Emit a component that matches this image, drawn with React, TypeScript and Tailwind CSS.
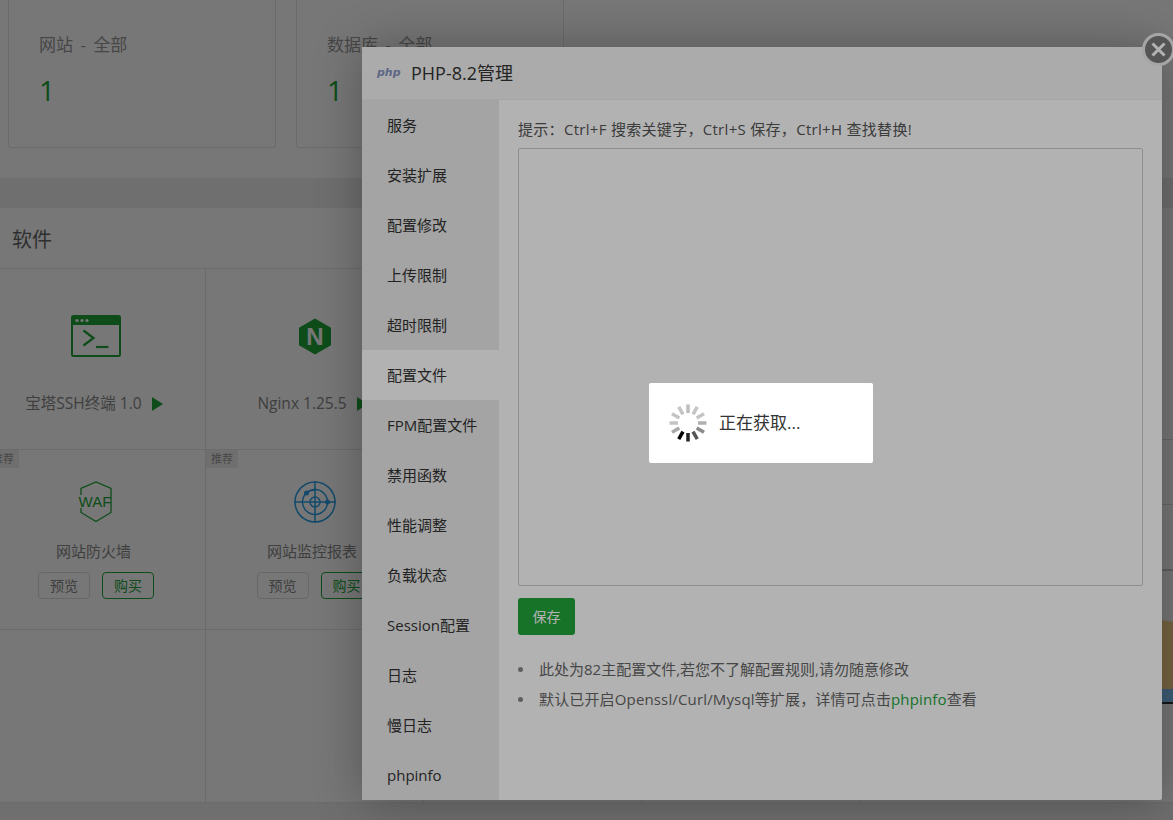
const SANS = "font-['Open_Sans','Noto_Sans_CJK_SC',sans-serif]";

const MENU = [
  "服务",
  "安装扩展",
  "配置修改",
  "上传限制",
  "超时限制",
  "配置文件",
  "FPM配置文件",
  "禁用函数",
  "性能调整",
  "负载状态",
  "Session配置",
  "日志",
  "慢日志",
  "phpinfo",
];

const SPINNER = [
  "#bdbdbd", "#c4c4c4", "#c4c4c4", "#b0b0b0", "#8a8a8a", "#555555",
  "#222222", "#000000", "#a8a8a8", "#c4c4c4", "#c4c4c4", "#c4c4c4",
];

function TerminalIcon() {
  return (
    <svg width="50" height="42" viewBox="0 0 50 42">
      <rect x="1" y="1" width="48" height="40" rx="1.5" fill="none" stroke="#20a53a" strokeWidth="2" />
      <rect x="1" y="1" width="48" height="9" fill="#20a53a" />
      <circle cx="6" cy="5.5" r="1.6" fill="#fff" />
      <circle cx="11" cy="5.5" r="1.6" fill="#fff" />
      <circle cx="16" cy="5.5" r="1.6" fill="#fff" />
      <path d="M12.500 15.500l10 7.500-10 7.500" fill="none" stroke="#20a53a" strokeWidth="2.200" />
      <path d="M25 32h12.500" fill="none" stroke="#20a53a" strokeWidth="2.200" />
    </svg>
  );
}

function NginxIcon() {
  return (
    <svg width="34" height="37" viewBox="0 0 34 37">
      <path d="M17 0.5l16 9.2v17.6l-16 9.2-16-9.2V9.700z" fill="#20a53a" />
      <text x="17" y="26.500" textAnchor="middle" fontSize="24" fontWeight="700" fill="#fff" fontFamily="Liberation Sans, sans-serif">
        N
      </text>
    </svg>
  );
}

function WafIcon() {
  return (
    <svg width="36" height="42" viewBox="0 0 36 42">
      <path d="M3 14V7.500L18 1l15 6.500V27M3 27v4.500L18 40.500l15-9V27" fill="none" stroke="#20a53a" strokeWidth="1.300" />
      <text x="17" y="25.500" textAnchor="middle" fontSize="15" fill="#20a53a" fontFamily="Liberation Sans, sans-serif">
        WAF
      </text>
    </svg>
  );
}

function RadarIcon() {
  return (
    <svg width="42" height="42" viewBox="0 0 42 42" fill="none" stroke="#2a9ee6" strokeWidth="1.500">
      <circle cx="21" cy="21" r="20" />
      <circle cx="21" cy="21" r="12.500" />
      <circle cx="21" cy="21" r="5" />
      <path d="M21 0v42M0 21h42" />
      <path d="M13 11.500c3-2 6-2.500 8-2.500" />
      <circle cx="12.500" cy="12" r="2.500" fill="#2a9ee6" stroke="none" />
      <circle cx="33.500" cy="21" r="2.500" fill="#2a9ee6" stroke="none" />
    </svg>
  );
}

function Spinner() {
  return (
    <svg width="38" height="38" viewBox="0 0 38 38" className="shrink-0">
      {SPINNER.map((color, i) => (
        <line
          key={i}
          x1="19"
          y1="0.5"
          x2="19"
          y2="9"
          stroke={color}
          strokeWidth="3.500"
          transform={`rotate(${i * 30} 19 19)`}
        />
      ))}
    </svg>
  );
}

function PlayCell({ icon, name }: { icon: React.ReactNode; name: string }) {
  return (
    <div className="flex flex-col items-center border-r border-b border-[#e6e6e6] pt-[45px]">
      <div className="flex h-[44px] items-center">{icon}</div>
      <div className="mt-[34px] flex items-center pr-[4px] text-[15.5px] text-[#888]">
        <span>{name}</span>
        <span className="ml-[10px] h-0 w-0 border-y-[7px] border-l-[11px] border-y-transparent border-l-[#20a53a]" />
      </div>
    </div>
  );
}

function BuyCell({ icon, name }: { icon: React.ReactNode; name: string }) {
  return (
    <div className="relative flex flex-col items-center border-r border-b border-[#e6e6e6] pt-[31px]">
      <span className="absolute top-0 left-0 bg-[#eeeeee] px-[5px] py-px text-[11px] leading-[16px] text-[#999]">推荐</span>
      <div className="flex h-[42px] items-center">{icon}</div>
      <div className="mt-[18px] pr-[5px] text-[15px] leading-[20px] text-[#888]">{name}</div>
      <div className="mt-[11px] flex gap-[12px]">
        <button className="h-[27px] w-[52px] rounded-[4px] border border-[#dddddd] text-[14px] text-[#888]">预览</button>
        <button className="h-[27px] w-[52px] rounded-[4px] border border-[#20a53a] text-[14px] text-[#20a53a]">购买</button>
      </div>
    </div>
  );
}

function StatCard({ label }: { label: string }) {
  return (
    <div className="h-[148px] w-[268px] rounded-b-[3px] border border-t-0 border-[#e6e6e6] pt-[32px] pl-[30px]">
      <div className="text-[17px] leading-[26px] text-[#999] [word-spacing:3px]">{label}</div>
      <div className="mt-[14px] text-[28px] leading-[36px] text-[#20a53a]">1</div>
    </div>
  );
}

export default function App() {
  return (
    <div className={`relative h-[820px] w-[1173px] overflow-hidden bg-[#eeeeee] ${SANS}`}>
      {/* page behind the dialog */}
      <div className="flex h-[178px] gap-[20px] bg-white pl-[8px]">
        <StatCard label="网站 - 全部" />
        <StatCard label="数据库 - 全部" />
      </div>
      <div className="mt-[30px] flex h-[595px] border-b border-[#e6e6e6] bg-white">
        <div className="w-[900px] shrink-0 overflow-hidden">
          <div className="flex h-[61px] items-center border-b border-[#e6e6e6] pt-[4px] pl-[12px] text-[20px] text-[#666]">软件</div>
          <div className="-ml-[13px] grid w-[913px] grid-cols-[219px_218px_218px_218px] grid-rows-[181px_180px_173px]">
            <PlayCell icon={<TerminalIcon />} name="宝塔SSH终端 1.0" />
            <PlayCell icon={<NginxIcon />} name="Nginx 1.25.5" />
            <PlayCell icon={<TerminalIcon />} name="MySQL 5.7" />
            <PlayCell icon={<NginxIcon />} name="PHP-8.2" />
            <BuyCell icon={<WafIcon />} name="网站防火墙" />
            <BuyCell icon={<RadarIcon />} name="网站监控报表" />
            <BuyCell icon={<WafIcon />} name="网站防篡改" />
            <BuyCell icon={<RadarIcon />} name="堡塔运维平台" />
            <div className="border-r border-[#e6e6e6]" />
            <div className="border-r border-[#e6e6e6]" />
            <div className="border-r border-[#e6e6e6]" />
            <div className="border-r border-[#e6e6e6]" />
          </div>
        </div>
        <div className="flex flex-1 flex-col">
          <div className="h-[232px] border-b border-[#dddddd]" />
          <div className="h-[65px] border-b border-[#dddddd]" />
          <div className="h-[66px] border-b-2 border-[#cccccc]" />
          <svg className="mt-[49px] h-[84px] w-full" viewBox="0 0 273 84" preserveAspectRatio="none">
            <rect width="273" height="69" fill="#ffd58f" />
            <polygon points="262,0 273,0 273,2" fill="#ffffff" />
            <rect y="69" width="273" height="13" fill="#85c8ff" />
            <rect y="82" width="273" height="2" fill="#333333" />
          </svg>
        </div>
      </div>

      <div className="absolute inset-0 bg-black/[0.33]" />

      {/* dialog */}
      <div className="absolute top-[47px] left-[362px] flex h-[753px] w-[800px] flex-col rounded-[2px] bg-white shadow-[1px_1px_50px_rgba(0,0,0,0.3)]">
        <div className="flex h-[53px] shrink-0 items-center border-b border-[#eeeeee] bg-[#f5f5f5] pl-[15px]">
          <span className="w-[34px] font-['DejaVu_Sans',sans-serif] text-[11px] font-bold text-[#8892bf] italic">php</span>
          <span className="text-[18px] text-[#333]">PHP-8.2管理</span>
        </div>
        <div className="flex flex-1">
          <div className="w-[137px] shrink-0 bg-[#ebebeb]">
            {MENU.map((item) => (
              <div
                key={item}
                className={`flex h-[50px] items-center pl-[25px] text-[15px] text-[#333] ${item === "配置文件" ? "bg-white" : ""}`}
              >
                {item}
              </div>
            ))}
          </div>
          <div className="flex-1 px-[19px] pt-[19px]">
            <div className="text-[15px] leading-[20px] tracking-[0.3px] text-[#555]">提示：Ctrl+F 搜索关键字，Ctrl+S 保存，Ctrl+H 查找替换!</div>
            <div className="mt-[9px] h-[438px] rounded-[2px] border border-[#cccccc]" />
            <button className="mt-[12px] h-[37px] w-[57px] rounded-[3px] bg-[#20a53a] text-[14px] text-white">保存</button>
            <ul className="mt-[19px] text-[15px] text-[#666]">
              <li className="flex h-[30px] items-center gap-[16px]">
                <span className="h-[5px] w-[5px] rounded-full bg-[#888]" />
                <span>此处为82主配置文件,若您不了解配置规则,请勿随意修改</span>
              </li>
              <li className="flex h-[30px] items-center gap-[16px]">
                <span className="h-[5px] w-[5px] rounded-full bg-[#888]" />
                <span className="tracking-[0.15px]">
                  默认已开启Openssl/Curl/Mysql等扩展，详情可点击<span className="text-[#20a53a]">phpinfo</span>查看
                </span>
              </li>
            </ul>
          </div>
        </div>
        <button className="absolute -top-[14px] -right-[13px] flex h-[33px] w-[33px] items-center justify-center rounded-full border-[3px] border-[#ededed] bg-[#7a7a7a]">
          <svg width="17" height="17" viewBox="0 0 17 17">
            <path d="M2.500 2.500l12 12M14.500 2.500l-12 12" stroke="#fff" strokeWidth="3" />
          </svg>
        </button>
      </div>

      <div className="absolute inset-0 bg-black/30" />

      {/* loading toast */}
      <div className="absolute top-[383px] left-[649px] flex h-[80px] w-[224px] items-center gap-[12px] rounded-[2px] bg-white pl-[20px] text-[17px] text-[#333]">
        <Spinner />
        <span>正在获取...</span>
      </div>
    </div>
  );
}
